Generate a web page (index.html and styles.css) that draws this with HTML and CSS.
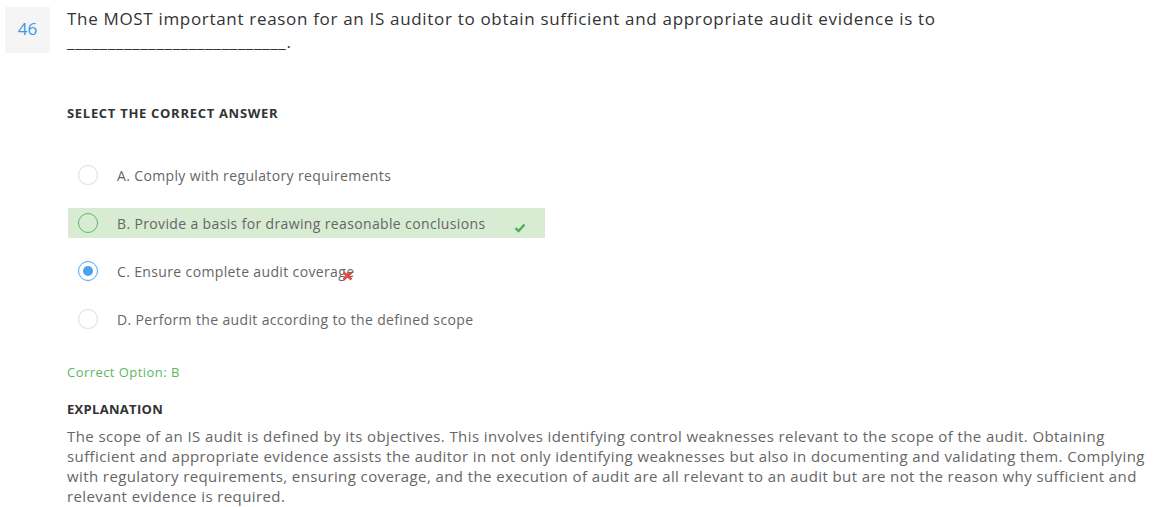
FILE: index.html
```html
<!DOCTYPE html>
<html lang="en">
<head>
<meta charset="utf-8">
<title>Question 46</title>
<link rel="stylesheet" href="styles.css">
</head>
<body>
<div class="question">
  <div class="qnum">46</div>
  <div class="qbody">
    <p class="qtext">The MOST important reason for an IS auditor to obtain sufficient and appropriate audit evidence is to ___________________________.</p>
    <h3 class="label">SELECT THE CORRECT ANSWER</h3>
    <ul class="options">
      <li class="option"><span class="radio"></span><span class="otext">A. Comply with regulatory requirements</span></li>
      <li class="option correct"><span class="radio"></span><span class="otext">B. Provide a basis for drawing reasonable conclusions</span>
        <svg class="check" width="12" height="10" viewBox="0 0 12 10"><path d="M1.5 5.2 L4.5 8 L10.5 1.5" fill="none" stroke="#4caf50" stroke-width="2.4"/></svg>
      </li>
      <li class="option chosen"><span class="radio"></span><span class="otext">C. Ensure complete audit coverage<svg class="cross" width="11" height="10" viewBox="0 0 11 10"><path d="M1.5 1.5 L9.5 8.5 M9.5 1.5 L1.5 8.5" stroke="#e0483e" stroke-width="2.4"/></svg></span></li>
      <li class="option"><span class="radio"></span><span class="otext">D. Perform the audit according to the defined scope</span></li>
    </ul>
    <p class="answer">Correct Option: B</p>
    <h3 class="label expl-label">EXPLANATION</h3>
    <p class="expl">The scope of an IS audit is defined by its objectives. This involves identifying control weaknesses relevant to the scope of the audit. Obtaining sufficient and appropriate evidence assists the auditor in not only identifying weaknesses but also in documenting and validating them. Complying with regulatory requirements, ensuring coverage, and the execution of audit are all relevant to an audit but are not the reason why sufficient and relevant evidence is required.</p>
  </div>
</div>
</body>
</html>
```
FILE: styles.css
```css
* { box-sizing: border-box; }
body {
  margin: 0;
  background: #fff;
  font-family: "Open Sans", "DejaVu Sans", sans-serif;
  color: #333;
}
.question {
  display: flex;
  gap: 17px;
  padding: 7px 0 0 5px;
}
.qnum {
  flex: 0 0 45px;
  height: 46px;
  background: #f5f5f5;
  color: #3d97ea;
  font-size: 17px;
  display: flex;
  align-items: center;
  justify-content: center;
  padding-bottom: 3px;
}
.qbody { flex: 1; }
.qtext {
  margin: 0;
  font-size: 17px;
  line-height: 23px;
  letter-spacing: 0.68px;
  color: #333;
  width: 900px;
}
.label {
  margin: 51px 0 0;
  font-size: 13px;
  font-weight: 700;
  letter-spacing: 0.7px;
  color: #333;
}
.options {
  list-style: none;
  margin: 38px 0 0;
  padding: 0;
}
.option {
  display: flex;
  align-items: center;
  width: 477px;
  height: 30px;
  margin: 0 0 18px 1px;
  padding-left: 10px;
  position: relative;
}
.option.correct { background: #d8ecd3; }
.radio {
  width: 20px;
  height: 20px;
  border-radius: 50%;
  border: 1px solid #ddd;
  background: #fff;
  flex: 0 0 20px;
  position: relative;
}
.correct .radio { border-color: #5cb85c; background: transparent; }
.chosen .radio { border-color: #4aa3ee; }
.chosen .radio::after {
  content: "";
  position: absolute;
  left: 4px; top: 4px;
  width: 10px; height: 10px;
  border-radius: 50%;
  background: #4aa3ee;
}
.otext {
  margin-left: 19px;
  font-size: 14px;
  letter-spacing: 0.36px;
  color: #666;
  position: relative;
}
.check { margin-left: 29px; margin-top: 9px; }
.cross { position: absolute; right: 1px; top: 9px; }
.answer {
  margin: 29px 0 0;
  font-size: 13px;
  letter-spacing: 0.45px;
  color: #5cb85c;
}
.expl-label { margin-top: 19px; letter-spacing: 0.3px; }
.expl {
  margin: 8px 0 0;
  padding-right: 4px;
  font-size: 15px;
  line-height: 20px;
  letter-spacing: 0.4px;
  color: #666;
}
```
